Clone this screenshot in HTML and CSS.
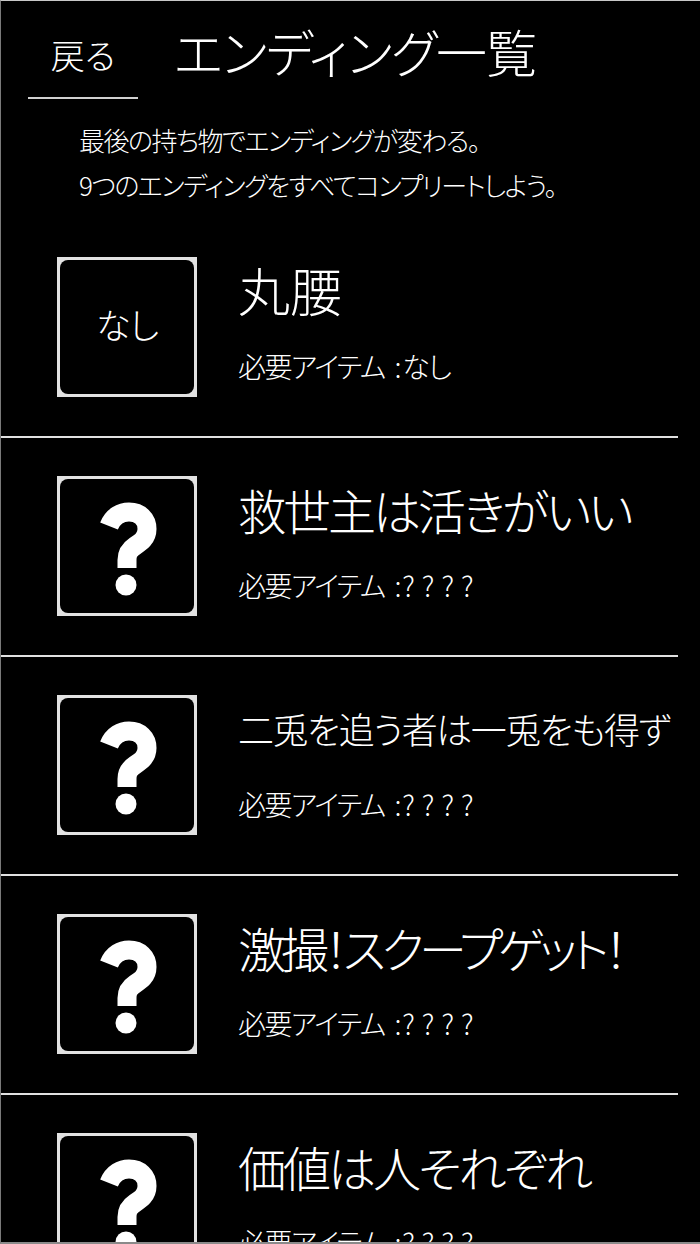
FILE: index.html
```html
<!DOCTYPE html>
<html lang="ja">
<head>
<meta charset="utf-8">
<title>エンディング一覧</title>
<link rel="stylesheet" href="styles.css">
</head>
<body>
<div class="frame">
  <header class="header">
    <div class="back">戻る</div>
    <h1 class="title">エンディング一覧</h1>
  </header>
  <p class="intro">最後の持ち物でエンディングが変わる。<br>9つのエンディングをすべてコンプリートしよう。</p>
  <ul class="list">
    <li class="item">
      <div class="thumb"><div class="thumb-inner"><span class="none">なし</span></div></div>
      <div class="info">
        <div class="name wide">丸腰</div>
        <div class="req">必要アイテム<span class="colon">:</span>なし</div>
      </div>
    </li>
    <li class="item">
      <div class="thumb"><div class="thumb-inner">
        <svg class="q" viewBox="0 0 134 134" width="134" height="134"><path d="M49 47 C53 37 61 33 69 33 C80 33 87 40 87 50 C87 59 81 63 75 67 C69 71 67 75 67 81 L67 89" fill="none" stroke="#fff" stroke-width="19"/><circle cx="66" cy="106" r="10.5" fill="#fff"/></svg>
      </div></div>
      <div class="info">
        <div class="name">救世主は活きがいい</div>
        <div class="req">必要アイテム<span class="colon">:</span><span class="qs">????</span></div>
      </div>
    </li>
    <li class="item">
      <div class="thumb"><div class="thumb-inner">
        <svg class="q" viewBox="0 0 134 134" width="134" height="134"><path d="M49 47 C53 37 61 33 69 33 C80 33 87 40 87 50 C87 59 81 63 75 67 C69 71 67 75 67 81 L67 89" fill="none" stroke="#fff" stroke-width="19"/><circle cx="66" cy="106" r="10.5" fill="#fff"/></svg>
      </div></div>
      <div class="info">
        <div class="name small">二兎を追う者は一兎をも得ず</div>
        <div class="req">必要アイテム<span class="colon">:</span><span class="qs">????</span></div>
      </div>
    </li>
    <li class="item">
      <div class="thumb"><div class="thumb-inner">
        <svg class="q" viewBox="0 0 134 134" width="134" height="134"><path d="M49 47 C53 37 61 33 69 33 C80 33 87 40 87 50 C87 59 81 63 75 67 C69 71 67 75 67 81 L67 89" fill="none" stroke="#fff" stroke-width="19"/><circle cx="66" cy="106" r="10.5" fill="#fff"/></svg>
      </div></div>
      <div class="info">
        <div class="name tight">激撮！スクープゲット！</div>
        <div class="req">必要アイテム<span class="colon">:</span><span class="qs">????</span></div>
      </div>
    </li>
    <li class="item">
      <div class="thumb"><div class="thumb-inner">
        <svg class="q" viewBox="0 0 134 134" width="134" height="134"><path d="M49 47 C53 37 61 33 69 33 C80 33 87 40 87 50 C87 59 81 63 75 67 C69 71 67 75 67 81 L67 89" fill="none" stroke="#fff" stroke-width="19"/><circle cx="66" cy="106" r="10.5" fill="#fff"/></svg>
      </div></div>
      <div class="info">
        <div class="name">価値は人それぞれ</div>
        <div class="req">必要アイテム<span class="colon">:</span><span class="qs">????</span></div>
      </div>
    </li>
  </ul>
</div>
</body>
</html>
```
FILE: styles.css
```css
html, body {
  margin: 0;
  padding: 0;
  background: #000;
}
body {
  color: #fff;
  font-family: "Noto Sans CJK JP", "Noto Sans", sans-serif;
  font-weight: 300;
  font-feature-settings: "palt";
}
.frame {
  height: 1244px;
  box-sizing: border-box;
  border-top: 1px solid #c8c8c8;
  border-left: 1px solid #7a7a7a;
  border-bottom: 2px solid #8a8a8a;
  overflow: hidden;
}
.header {
  display: flex;
  align-items: flex-start;
  padding-top: 12px;
}
.back {
  margin-left: 27px;
  width: 110px;
  height: 82px;
  border-bottom: 2px solid #d0d0d0;
  display: flex;
  align-items: center;
  justify-content: center;
  font-size: 34px;
  padding-bottom: 2px;
  box-sizing: content-box;
}
.title {
  margin: 0 0 0 36px;
  font-size: 51px;
  font-weight: 300;
  line-height: 76px;
  letter-spacing: -1.2px;
}
.intro {
  margin: 18px 0 0 78px;
  font-size: 26px;
  line-height: 45px;
  letter-spacing: -1.5px;
}
.list {
  list-style: none;
  margin: 12px 0 0;
  padding: 0;
  width: 677px;
}
.item {
  display: flex;
  align-items: flex-start;
  padding: 38px 0 39px 56px;
  border-bottom: 2px solid #e0e0e0;
}
.thumb {
  width: 140px;
  height: 140px;
  flex: none;
  box-sizing: border-box;
  padding: 3px;
  background: #e2e2e2;
}
.thumb-inner {
  height: 100%;
  background: #000;
  border-radius: 8px;
  display: flex;
  align-items: center;
  justify-content: center;
}
.none {
  font-size: 35px;
  line-height: 1;
  letter-spacing: -1px;
  margin-bottom: 8px;
}
.q {
  display: block;
}
.info {
  margin-left: 41px;
  display: flex;
  flex-direction: column;
}
.name {
  font-size: 48px;
  line-height: 66px;
  letter-spacing: -3px;
  white-space: nowrap;
}
.name.wide {
  font-size: 52px;
  letter-spacing: 0;
}
.name.small {
  font-size: 36px;
  letter-spacing: -1.5px;
}
.name.tight {
  letter-spacing: -5px;
}
.req {
  margin-top: 29px;
  font-size: 28px;
  line-height: 28px;
  letter-spacing: -1.5px;
  white-space: nowrap;
}
.colon {
  margin: 0 2px 0 10px;
}
.qs {
  letter-spacing: 7px;
}
```
